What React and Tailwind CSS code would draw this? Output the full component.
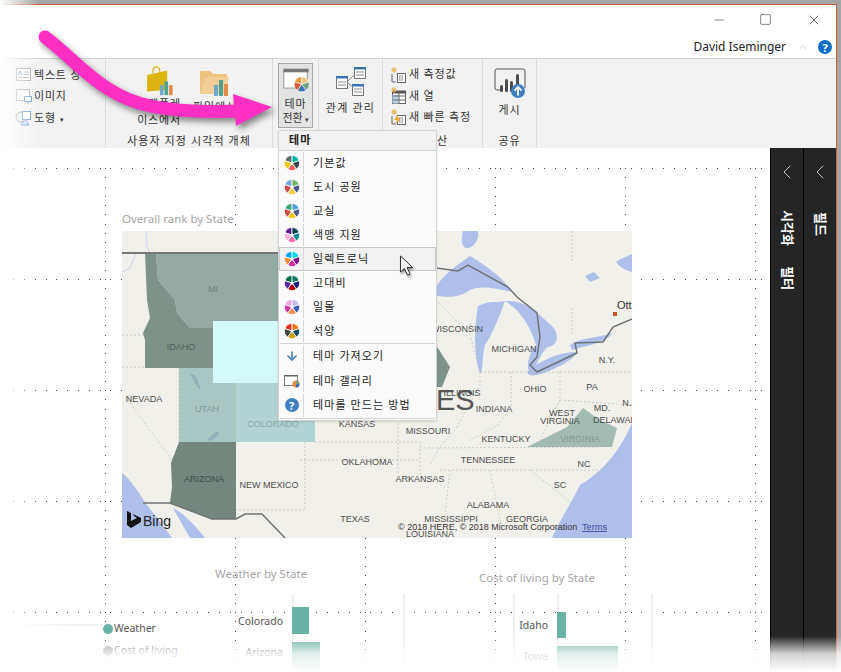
import { ChevronLeft, ChevronUp, Minus, Square, X, ArrowDown } from "lucide-react";

const themes = [
  { name: "기본값", colors: ["#5f6b6d", "#01b8aa", "#374649", "#fd625e", "#f2c80f"] },
  { name: "도시 공원", colors: ["#73a9e0", "#73b761", "#4a588a", "#ecc846", "#cd4c46"] },
  { name: "교실", colors: ["#41a36f", "#4e9fd9", "#4a588a", "#f2c80f", "#cd4c46"] },
  { name: "색맹 지원", colors: ["#5e1a8c", "#074650", "#009292", "#ff6db6", "#ffb6db"] },
  { name: "일렉트로닉", colors: ["#01a4ef", "#00d9e9", "#7f0c90", "#c9309c", "#ff9040"], hover: true },
  { name: "고대비", colors: ["#006b3f", "#0d7a6b", "#1a1a80", "#b00000", "#5b2d9e"] },
  { name: "일몰", colors: ["#f0a8e8", "#c8b8f0", "#3b5fb8", "#ff9050", "#d0359a"] },
  { name: "석양", colors: ["#e83020", "#f07820", "#0b4d5c", "#c8a000", "#444444"] },
];

const mapLabels = [
  ["MI", 213, 292, "#6f807a"], ["IDAHO", 181, 350, "#4f5f58"], ["NEVADA", 144, 402], ["UTAH", 207, 412, "#7c9a96"], ["COLORADO", 273, 427, "#8aa5a5"],
  ["KANSAS", 357, 427], ["OKLAHOMA", 367, 465], ["NEW MEXICO", 269, 488], ["ARIZONA", 204, 482, "#3f4d47"], ["TEXAS", 355, 522],
  ["WISCONSIN", 457, 332], ["MICHIGAN", 514, 352], ["OHIO", 535, 392], ["PA", 592, 390], ["N.Y.", 607, 363],
  ["ILLINOIS", 462, 396], ["INDIANA", 494, 412], ["WEST", 562, 416], ["VIRGINIA", 560, 424], ["MD.", 602, 411],
  ["DELAWARE", 618, 423], ["N.J", 629, 406], ["MISSOURI", 428, 434], ["KENTUCKY", 506, 442], ["VIRGINIA", 580, 442, "#7f9a90"],
  ["TENNESSEE", 488, 463], ["NC", 584, 467], ["ARKANSAS", 420, 482], ["SC", 560, 488], ["ALABAMA", 488, 508],
  ["MISSISSIPPI", 451, 522], ["GEORGIA", 527, 522], ["LOUISIANA", 430, 537],
];

const stateLines = [
  "M122 335 L145 335",
  "M122 367 L145 367",
  "M179 368 L179 442",
  "M128 400 L172 460",
  "M315 383 L315 420",
  "M315 442 L420 442 L420 475 L445 487",
  "M305 442 L305 510 L236 510",
  "M398 419 L398 475",
  "M436 300 L470 335 L480 372",
  "M480 372 L480 385 L455 430 L440 447 L430 465",
  "M300 460 L420 460",
  "M420 448 L600 447",
  "M440 470 L600 470 L625 455",
  "M480 372 L560 372",
  "M511 372 L511 408 L498 425 L470 440",
  "M560 372 L560 400 L590 402 L632 405",
  "M560 372 L632 372",
  "M572 231 L572 262",
  "M572 308 L572 335",
  "M450 470 L445 515",
  "M490 470 L502 530",
  "M530 470 L580 510",
  "M560 400 L540 440",
];

const lakes = [
  "M436 287 C445 272 462 262 470 256 C490 268 505 280 512 292 C495 288 480 285 470 290 C455 300 445 296 436 296 Z",
  "M478 306 C490 300 498 303 505 301 C500 315 492 335 485 345 C481 360 484 372 480 373 C475 360 473 335 478 306 Z",
  "M505 301 C520 300 530 305 552 326 C560 335 558 345 548 347 C540 352 535 372 530 372 C525 368 530 350 536 345 C530 325 520 310 505 301 Z",
  "M527 372 C540 360 560 352 576 352 C578 358 550 372 537 375 C530 376 528 375 527 372 Z",
  "M570 345 C580 337 600 338 612 333 C608 342 590 345 572 350 Z",
  "M463 231 L478 231 C480 240 472 250 465 248 C460 243 462 236 463 231 Z",
  "M616 262 C622 258 628 256 632 254 L632 272 C626 270 620 268 616 262 Z",
  "M585 276 L594 272 L600 278 L590 282 Z",
  "M632 423 C620 450 605 470 580 485 C570 505 560 520 552 538 L632 538 Z",
  "M122 473 C130 478 140 495 147 505 C155 515 165 528 172 538 L122 538 Z",
  "M173 508 C182 512 195 525 205 538 L190 538 Z",
];

const pieWedge = (cx, cy, r, i) => {
  const a = ((i * 72 - 72 - 90) * Math.PI) / 180;
  const b = (((i + 1) * 72 - 72 - 90) * Math.PI) / 180;
  return `M${cx} ${cy} L${cx + r * Math.cos(a)} ${cy + r * Math.sin(a)} A${r} ${r} 0 0 1 ${cx + r * Math.cos(b)} ${cy + r * Math.sin(b)} Z`;
};

function Pie({ colors, size = 16 }) {
  return (
    <svg width={size} height={size} viewBox="0 0 16 16" className="shrink-0">
      {colors.map((c, i) => (
        <path key={i} d={pieWedge(8, 8, 7.5, i)} fill={c} stroke="#fff" strokeWidth="0.8" />
      ))}
      <circle cx="8" cy="8" r="1.6" fill="#fff" />
    </svg>
  );
}

function Dots() {
  const dots = [];
  for (let r = 0; r < 5; r++) {
    const y = 168 + r * 111;
    for (let x = 13; x < 770; x += 130 / 12) dots.push([x, y]);
  }
  for (let c = 0; c < 6; c++) {
    const x = 105 + c * 130;
    for (let y = 168; y < 672; y += 111 / 12) dots.push([x, y]);
  }
  return (
    <svg className="absolute left-0 top-0" width="770" height="524" viewBox="0 148 770 524">
      {dots.map(([x, y], i) => (
        <rect key={i} x={Math.round(x)} y={Math.round(y)} width="1" height="1" fill="#444" />
      ))}
    </svg>
  );
}

function UsMap() {
  return (
    <svg className="absolute left-[122px] top-[83px]" width="510" height="307" viewBox="122 231 510 307">
      <rect x="122" y="231" width="510" height="307" fill="#f1f0eb" />
      {lakes.map((d, i) => (
        <path key={i} d={d} fill="#aec0ea" />
      ))}
      <path d="M146 231 L147 247 L150 253 M122 272 L130 268 L136 253" fill="none" stroke="#c5d3ee" strokeWidth="1" />
      <path d="M156 253 L280 253 L280 321 L213 321 L213 328 L190 328 L177 313 L175 300 L158 280 Z" fill="#94aaa2" />
      <path d="M145 253 L156 253 L158 280 L175 300 L177 313 L190 328 L213 328 L213 368 L145 368 L145 340 L143 333 L150 318 L147 300 Z" fill="#7f9289" />
      <rect x="213" y="321" width="70" height="62" fill="#d3f9f8" />
      <path d="M179 368 L213 368 L213 383 L236 383 L236 442 L179 442 Z" fill="#a9c7c3" />
      <rect x="236" y="383" width="79" height="59" fill="#b2d3d3" />
      <path d="M179 442 L236 442 L236 519 L212 519 L170 503 L172 487 L171 463 Z" fill="#75867e" />
      <path d="M430 345 L436 345 L450 367 L442 387 L430 387 Z" fill="#7f9289" />
      <path d="M527 447 L547 437 L567 427 L583 408 L600 420 L617 428 L612 447 Z" fill="#a3bcb3" />
      <path d="M190 373 C194 382 197 388 201 390 L196 376 Z" fill="#8fb1b8" />
      <path d="M207 440 L216 431 L220 433 L212 441 Z" fill="#8fb1b8" />
      {stateLines.map((d, i) => (
        <path key={i} d={d} fill="none" stroke="#b4b4ac" strokeWidth="0.6" strokeDasharray="2 2" />
      ))}
      <path d="M122 253 L285 253" stroke="#77787a" strokeWidth="2" fill="none" />
      <path
        d="M436 268 L458 271 L468 265 L508 287 L517 297 L537 313 L540 337 L537 357 L530 365 L537 372 L577 353 L575 343 L603 342 L613 327 L632 319"
        stroke="#6f7276"
        strokeWidth="1.5"
        fill="none"
      />
      <path d="M143 503 L170 503 L212 519 L236 519 L245 514 L262 514 L285 538" stroke="#6f7276" strokeWidth="1.5" fill="none" />
      {mapLabels.map(([t, x, y, c], i) => (
        <text key={i} x={x} y={y} textAnchor="middle" fontSize="9" fill={c || "#4d4d4d"} fontFamily="Liberation Sans">
          {t}
        </text>
      ))}
      <text x="617" y="309" fontSize="11" fill="#333" fontFamily="Liberation Sans">Ott</text>
      <rect x="613" y="312" width="4" height="4" fill="#c8502a" />
      <text x="436" y="410" fontSize="29" fill="#555" fontFamily="Liberation Sans">ES</text>
      <text x="398" y="530" fontSize="9" fill="#333" fontFamily="Liberation Sans">© 2018 HERE, © 2018 Microsoft Corporation</text>
      <text x="582" y="530" fontSize="9.2" fill="#3a4fa0" textDecoration="underline" fontFamily="Liberation Sans">Terms</text>
      <path d="M127 511 L131 513 L131 521 L137 518 L134 516 L133 514 L141 518 L141 522 L131 528 L127 525 Z" fill="#111" />
      <text x="143" y="526" fontSize="14" fill="#222" fontFamily="Liberation Sans">Bing</text>
    </svg>
  );
}

function RibbonRow({ icon, label }) {
  return (
    <div className="flex h-[21.5px] items-center gap-[1px] whitespace-nowrap">
      <svg width="18" height="18" viewBox="0 0 18 18" className="shrink-0">{icon}</svg>
      <span>{label}</span>
    </div>
  );
}

const textBoxIcon = (
  <g fill="none">
    <rect x="1.5" y="2.5" width="14" height="12" fill="#fff" stroke="#a6a6a6" />
    <path d="M9 6h5M9 8.5h5M3 11.5h11" stroke="#a6a6a6" />
    <path d="M3 9l2-4 2 4" stroke="#5b9bd5" />
  </g>
);
const imageIcon = (
  <g fill="none">
    <rect x="1.5" y="2.5" width="13" height="11" fill="#fff" stroke="#a6a6a6" />
    <path d="M3 12l3-4 3 3" stroke="#b8cde6" />
    <rect x="9.5" y="9.5" width="7" height="5" fill="#fff" stroke="#5b9bd5" />
    <path d="M13 15v2" stroke="#5b9bd5" />
  </g>
);
const shapeIcon = (
  <g fill="none">
    <circle cx="6" cy="8" r="5" fill="#e8edf3" stroke="#7f7f7f" />
    <rect x="7.5" y="2.5" width="8" height="8" fill="#fff" stroke="#5b9bd5" />
    <path d="M6 16l4-6 4 6z" fill="#d4e3f3" stroke="#5b9bd5" />
  </g>
);
const calcIcon = (
  <g fill="none">
    <path d="M2 8v8h4" stroke="#666" />
    <rect x="7.5" y="7.5" width="8" height="9" fill="#fff" stroke="#666" />
    <path d="M9 10h5M9 12h5M9 14h5" stroke="#666" strokeDasharray="1.5 1" />
    <path d="M4 1v6M1 4h6M2 2l4 4M6 2l-4 4" stroke="#e8b24c" />
  </g>
);
const columnIcon = (
  <g fill="none">
    <rect x="2.5" y="4.5" width="13" height="12" fill="#fff" stroke="#666" />
    <rect x="2.5" y="8" width="6" height="8.5" fill="#bcd3ec" />
    <path d="M2 5h14" stroke="#555" strokeWidth="3" />
    <path d="M9 5v11M3 9h13M3 13h13" stroke="#666" />
    <path d="M4 0v6M1 3h6M2 1l4 4M6 1l-4 4" stroke="#e8b24c" />
  </g>
);
const quickIcon = (
  <g fill="none">
    <path d="M2 8v8h4" stroke="#666" />
    <rect x="7.5" y="7.5" width="8" height="9" fill="#fff" stroke="#666" />
    <path d="M9 10h5M9 12h5M9 14h5" stroke="#666" strokeDasharray="1.5 1" />
    <path d="M4 1v6M1 4h6M2 2l4 4M6 2l-4 4" stroke="#e8b24c" />
    <path d="M8 6L4 12h3l-2 5 6-7H8z" fill="#e8a33d" />
  </g>
);

function Ribbon() {
  return (
    <div className="flex h-[90px] shrink-0 border-t border-[#d2d2d2] bg-[#f2f2f2] text-[11px] tracking-[0.8px] text-[#333]">
      {/* 삽입 */}
      <div className="flex w-[106px] flex-col border-r border-[#dcdcdc] pl-[15px] pt-[5px]">
        <RibbonRow icon={textBoxIcon} label="텍스트 상자" />
        <RibbonRow icon={imageIcon} label="이미지" />
        <RibbonRow icon={shapeIcon} label={<>도형 <span className="text-[7px]">▾</span></>} />
      </div>
      {/* 사용자 지정 시각적 개체 */}
      <div className="flex w-[167px] flex-col border-r border-[#dcdcdc]">
        <div className="flex h-[69px] gap-[8px] pl-[28px] pt-[7px]">
          <div className="flex w-[50px] flex-col items-center">
            <svg width="32" height="34" viewBox="0 0 32 34">
              <path d="M9 8C9 3 11 1 13 1s4 2 4 6" fill="none" stroke="#dcb30f" strokeWidth="1.2" />
              <path d="M3 10l22-5v21L3 28z" fill="#dcb30f" />
              <rect x="17" y="21" width="4" height="11" fill="#6fa8c9" />
              <rect x="22" y="17" width="4" height="15" fill="#4ea394" />
              <rect x="27" y="21" width="4" height="11" fill="#e58b4a" />
            </svg>
            <span className="-mt-[1px] whitespace-nowrap leading-[16px]">마켓플레</span>
            <span className="whitespace-nowrap leading-[16px]">이스에서</span>
          </div>
          <div className="flex w-[46px] flex-col items-center">
            <svg width="32" height="34" viewBox="0 0 32 34">
              <path d="M1 5h10l3 3h14v20H1z" fill="#edc27f" />
              <path d="M1 28L6 11h24l-4 17z" fill="#f1cf97" />
              <rect x="15" y="19" width="4" height="11" fill="#6fa8c9" />
              <rect x="20" y="14" width="4" height="16" fill="#4ea394" />
              <rect x="25" y="18" width="4" height="12" fill="#e58b4a" />
            </svg>
            <span className="-mt-[1px] whitespace-nowrap leading-[16px]">파일에서</span>
          </div>
        </div>
        <div className="mt-[6px] whitespace-nowrap text-center leading-[14px] tracking-[1.1px]">사용자 지정 시각적 개체</div>
      </div>
      {/* 테마 */}
      <div className="flex w-[46px] flex-col items-center border-r border-[#dcdcdc] pt-[4px]">
        <div className="flex h-[65px] w-[35px] flex-col items-center border border-[#a6a6a6] bg-[#e3e3e3]">
          <svg width="32" height="30" viewBox="0 0 32 30" className="mt-[2px]">
            <rect x="2.5" y="5.5" width="26" height="19" fill="#fff" stroke="#8c8c8c" />
            <rect x="2" y="3" width="28" height="4" fill="#777" />
            <g transform="translate(13.5 11.5) scale(1.1)">
              <path d={pieWedge(8, 8, 7.5, 0)} fill="#e9983c" stroke="#fff" strokeWidth="0.6" />
              <path d={pieWedge(8, 8, 7.5, 1)} fill="#e8c78b" stroke="#fff" strokeWidth="0.6" />
              <path d={pieWedge(8, 8, 7.5, 2)} fill="#6f9e7c" stroke="#fff" strokeWidth="0.6" />
              <path d={pieWedge(8, 8, 7.5, 3)} fill="#3f72ad" stroke="#fff" strokeWidth="0.6" />
              <path d={pieWedge(8, 8, 7.5, 4)} fill="#d85d3c" stroke="#fff" strokeWidth="0.6" />
            </g>
          </svg>
          <span className="mt-[4px] leading-[14px]">테마</span>
          <span className="whitespace-nowrap leading-[14px] tracking-normal">전환<span className="text-[7px]"> ▾</span></span>
        </div>
      </div>
      {/* 관계 */}
      <div className="flex w-[64px] flex-col items-center border-r border-[#dcdcdc] pt-[8px]">
        <svg width="32" height="32" viewBox="0 0 32 32">
          <path d="M13 14l8-8M13 16l7 6" stroke="#888" fill="none" />
          <rect x="1.5" y="9.5" width="11" height="12" fill="#fff" stroke="#777" />
          <rect x="1" y="9" width="12" height="2.5" fill="#3f72ad" />
          <path d="M3 15h8M3 18h8" stroke="#888" />
          <rect x="19.5" y="0.5" width="11" height="11" fill="#fff" stroke="#777" />
          <rect x="19" y="0" width="12" height="2.5" fill="#3f72ad" />
          <path d="M21 5h8M21 8h8" stroke="#888" />
          <rect x="17.5" y="17.5" width="11" height="11" fill="#fff" stroke="#777" />
          <rect x="17" y="17" width="12" height="2.5" fill="#3f72ad" />
          <path d="M19 22h8M19 25h8" stroke="#888" />
        </svg>
        <span className="mt-[2px] whitespace-nowrap leading-[14px] tracking-[1.2px]">관계 관리</span>
      </div>
      {/* 계산 */}
      <div className="flex w-[100px] flex-col border-r border-[#dcdcdc] pl-[7px] pt-[5px]">
        <RibbonRow icon={calcIcon} label="새 측정값" />
        <RibbonRow icon={columnIcon} label="새 열" />
        <RibbonRow icon={quickIcon} label="새 빠른 측정" />
        <div className="mt-[6px] pl-[36px] leading-[14px]">계산</div>
      </div>
      {/* 공유 */}
      <div className="flex w-[54px] flex-col items-center border-r border-[#dcdcdc] pt-[9px]">
        <svg width="34" height="32" viewBox="0 0 34 32">
          <path d="M2 20V3a2 2 0 012-2h26a2 2 0 012 2v17" fill="none" stroke="#555" />
          <path d="M2 20a2 2 0 002 2h4" fill="none" stroke="#555" />
          <rect x="7" y="17" width="3" height="7" rx="1.5" fill="#4d4d4d" />
          <rect x="12" y="11" width="3" height="13" rx="1.5" fill="#4d4d4d" />
          <rect x="17" y="13" width="3" height="11" rx="1.5" fill="#4d4d4d" />
          <rect x="23" y="6" width="3" height="14" rx="1.5" fill="#4d4d4d" />
          <circle cx="25" cy="23" r="7" fill="#3f7fbf" />
          <path d="M25 27.5v-8M21.5 22.5l3.5-3.5 3.5 3.5" fill="none" stroke="#fff" strokeWidth="1.8" />
        </svg>
        <span className="mt-[3px] leading-[14px]">게시</span>
        <span className="mt-[17px] leading-[14px]">공유</span>
      </div>
    </div>
  );
}

function MenuAction({ label, icon }) {
  return (
    <div className="flex h-[24.5px] items-center border border-transparent">
      <div className="flex h-full w-[23px] items-center justify-center">{icon}</div>
      <div className="h-full w-px bg-[#d8d8d8]" />
      <span className="whitespace-nowrap pl-[9px]">{label}</span>
    </div>
  );
}

function ThemeMenu() {
  return (
    <div className="absolute left-[278px] top-[130px] z-10 flex w-[159px] flex-col rounded-[2px] border border-[#d4d4d4] bg-[#fbfbfb] pb-[1px] text-[11px] tracking-[1.1px] text-[#222] shadow-[0_1px_2px_rgba(0,0,0,0.12)]">
      <div className="flex h-[20px] items-center border-b border-[#d4d4d4] bg-[#f2f2f2] pl-[10px] font-bold">테마</div>
      {themes.map((t) => (
        <div
          key={t.name}
          className={`flex h-[24px] items-center border ${t.hover ? "border-[#c8c8c8] bg-[#f2f2f2]" : "border-transparent"}`}
        >
          <div className="flex h-full w-[23px] items-center justify-center"><Pie colors={t.colors} /></div>
          <div className="h-full w-px bg-[#d8d8d8]" />
          <span className="pl-[9px]">{t.name}</span>
        </div>
      ))}
      <div className="mx-px h-px bg-[#d4d4d4]" />
      <MenuAction label="테마 가져오기" icon={<ArrowDown size={14} strokeWidth={2.6} color="#3f7fbf" />} />
      <MenuAction
        label="테마 갤러리"
        icon={
          <svg width="16" height="14" viewBox="0 0 16 14">
            <rect x="0.5" y="1.5" width="13" height="10" fill="#fff" stroke="#777" />
            <rect x="0" y="1" width="14" height="1.5" fill="#666" />
            <circle cx="12" cy="10" r="3.5" fill="#e58b4a" />
            <path d="M12 10V6.5A3.5 3.5 0 0115.5 10z" fill="#6f9e7c" />
            <path d="M12 10h3.5A3.5 3.5 0 0112 13.5z" fill="#3f72ad" />
          </svg>
        }
      />
      <MenuAction
        label="테마를 만드는 방법"
        icon={
          <span className="flex h-[14px] w-[14px] items-center justify-center rounded-full bg-[#3f7fbf] text-[11px] font-bold leading-none tracking-normal text-white">?</span>
        }
      />
      <div className="mx-px h-px bg-[#d4d4d4]" />
    </div>
  );
}

function ReportCanvas() {
  return (
    <div className="relative flex-1">
      <Dots />
      <div className="absolute left-[122px] top-[62px] text-[11.5px] text-[#a6a6a6]">Overall rank by State</div>
      <UsMap />

      {/* 날씨 차트 */}
      <div className="absolute left-[215px] top-[417px] whitespace-nowrap text-[11.5px] text-[#a6a6a6]">Weather by State</div>
      <div className="absolute left-[292px] top-[446px] h-[78px] w-[2px] bg-[#efefef]" />
      <div className="absolute left-[403px] top-[446px] h-[78px] w-[2px] bg-[#efefef]" />
      <div className="absolute right-[487px] top-[466px] bg-white text-[10.5px] text-[#555]">Colorado</div>
      <div className="absolute left-[292px] top-[459px] h-[27px] w-[17px] bg-[#68b2a6]" />
      <div className="absolute right-[487px] top-[497px] text-[10.5px] text-[#555]">Arizona</div>
      <div className="absolute left-[292px] top-[494px] h-[30px] w-[28px] bg-[#68b2a6]" />

      {/* 생활비 차트 */}
      <div className="absolute left-[479px] top-[421px] whitespace-nowrap text-[11.5px] text-[#a6a6a6]">Cost of living by State</div>
      <div className="absolute left-[513px] top-[446px] h-[78px] w-[2px] bg-[#efefef]" />
      <div className="absolute left-[557px] top-[446px] h-[78px] w-[2px] bg-[#efefef]" />
      <div className="absolute left-[651px] top-[446px] h-[78px] w-[2px] bg-[#efefef]" />
      <div className="absolute right-[222px] top-[470px] bg-white text-[10.5px] text-[#555]">Idaho</div>
      <div className="absolute left-[557px] top-[464px] h-[26px] w-[9px] bg-[#68b2a6]" />
      <div className="absolute right-[222px] top-[501px] text-[10.5px] text-[#555]">Iowa</div>
      <div className="absolute left-[557px] top-[498px] h-[26px] w-[61px] bg-[#68b2a6]" />

      {/* 범례 */}
      <div className="absolute left-[10px] top-[476px] h-[2px] w-[93px] bg-gradient-to-r from-white to-[#ededed]" />
      <div className="absolute left-[103px] top-[473px] flex items-center gap-[1px] text-[10.5px] text-[#555]">
        <span className="h-[10px] w-[10px] rounded-full bg-[#68b2a6]" />
        Weather
      </div>
      <div className="absolute left-[103px] top-[495px] flex items-center gap-[1px] text-[10.5px] text-[#777]">
        <span className="h-[10px] w-[10px] rounded-full bg-[#999]" />
        Cost of living
      </div>
    </div>
  );
}

function SidePane({ children, top }) {
  return (
    <div className="flex w-[33px] flex-col items-center border-l border-black bg-[#252525] pt-[12px] text-white">
      <ChevronLeft size={24} strokeWidth={0.9} color="#d8d8d8" />
      <div className={`whitespace-pre text-[13px] font-bold leading-none [text-orientation:sideways] [writing-mode:vertical-rl] ${top}`}>{children}</div>
    </div>
  );
}

export default function App() {
  return (
    <div className="relative h-[672px] w-[841px] overflow-hidden bg-[#a5a5a5] pr-[4px] pt-[4px] font-['Noto_Sans','Noto_Sans_CJK_KR',sans-serif]">
      <div className="flex h-full flex-col border-r border-t border-[#c8623a] bg-white">
        {/* 창 제목 표시줄 */}
        <div className="flex h-[29px] shrink-0 items-center justify-end text-[#222]">
          <Minus size={14} strokeWidth={1} className="mr-[33px]" />
          <Square size={13} strokeWidth={1} className="mr-[34px]" />
          <X size={16} strokeWidth={1} className="mr-[14px]" />
        </div>
        <div className="flex h-[24px] shrink-0 translate-y-[1px] items-center justify-end text-[12px] text-[#222]">
          David Iseminger
          <ChevronUp size={12} strokeWidth={1} color="#999" className="ml-[11px]" />
          <span className="ml-[9px] mr-[4px] flex h-[14px] w-[14px] items-center justify-center rounded-full bg-[#0f6fc6] text-[11px] font-bold leading-none text-white">?</span>
        </div>
        <Ribbon />
        <div className="flex min-h-0 flex-1">
          <ReportCanvas />
          <SidePane top="mt-[26px]">{"시각화      필터"}</SidePane>
          <SidePane top="mt-[28px]">필드</SidePane>
        </div>
      </div>

      <ThemeMenu />

      {/* 마우스 커서 */}
      <svg className="absolute left-[399px] top-[255px] z-20 drop-shadow-[1px_2px_1px_rgba(0,0,0,0.4)]" width="16" height="22" viewBox="0 0 16 22">
        <path d="M1.5 1 L1.5 17 L5.5 13.5 L8.5 20 L11 19 L8 12.5 L13.5 12.5 Z" fill="#fff" stroke="#333" strokeWidth="1" />
      </svg>

      {/* 강조 화살표 */}
      <svg className="absolute left-0 top-0 z-20 drop-shadow-[3px_4px_3px_rgba(0,0,0,0.45)]" width="290" height="140" viewBox="0 0 290 140">
        <path d="M45 37 C78 62 102 96 150 106 C180 112 210 112 240 111" fill="none" stroke="#ff2fc3" strokeWidth="13" strokeLinecap="round" />
        <path d="M233 94 L272 107 L236 126 Z" fill="#ff2fc3" />
      </svg>

      {/* 가장자리 페이드 */}
      <div className="absolute inset-y-0 left-0 z-30 w-[40px] bg-gradient-to-r from-white to-transparent" />
      <div className="absolute inset-x-0 bottom-0 z-30 h-[36px] bg-gradient-to-t from-white via-white/80 to-transparent" />
    </div>
  );
}
